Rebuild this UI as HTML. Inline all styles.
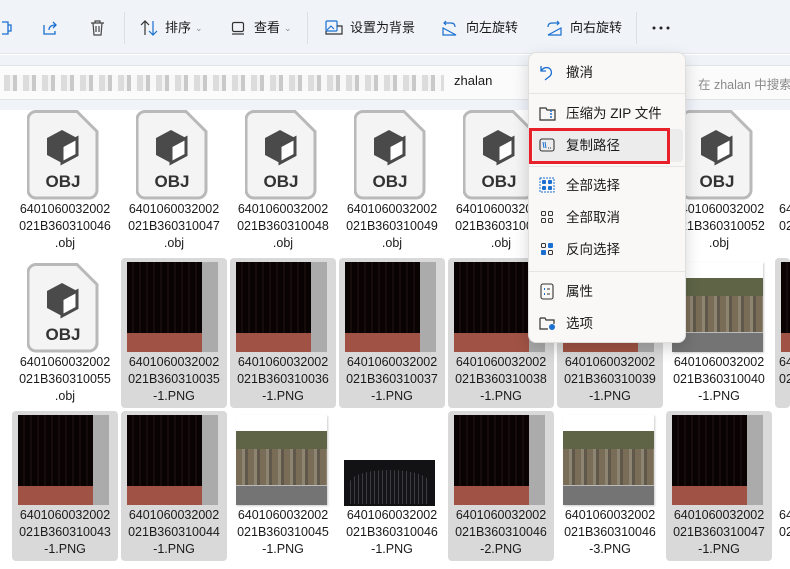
<!DOCTYPE html>
<html style="overflow:hidden"><head><meta charset="utf-8"><style>
*{margin:0;padding:0;box-sizing:border-box}
html,body{width:790px;height:569px;overflow:hidden}
body{background:#fff;font-family:"Liberation Sans","Noto Sans CJK SC",sans-serif;position:relative;color:#1a1a1a}
.tb{position:absolute;left:0;top:0;width:790px;height:54px;background:#f0f4f9;border-bottom:1px solid #e3e6ea}
.ti{position:absolute;top:19px;font-size:13px;line-height:18px;color:#1a1a1a}
.sep{position:absolute;top:12px;width:1px;height:32px;background:#dcdfe3}
.addr{position:absolute;left:0;top:55px;width:790px;height:55px;background:#f0f4f9}
.abox{position:absolute;left:0;top:10px;width:790px;height:35px;background:#fbfbfc;border-top:1px solid #e2e4e8;border-bottom:1px solid #e2e4e8}
.t{position:absolute;width:106px;height:150px;border-radius:4px;overflow:hidden}
.sel{background:#d9d9d9}
.cap{position:absolute;left:0;top:96px;width:106px;text-align:center;font-size:12.5px;line-height:17px;color:#1a1a1a;white-space:nowrap;overflow:hidden}
.obj{position:absolute;left:15px;top:5px}
.dk{position:absolute;left:6px;top:4px;width:91px;height:90px;background:#0a0303;overflow:hidden}
.dk .r{position:absolute;left:0;bottom:0;width:75px;height:19px;background:#a05344}
.dk .g{position:absolute;right:0;top:0;width:16px;height:90px;background:#ababab}
.dk .s{position:absolute;left:0;top:0;width:75px;height:71px;background:repeating-linear-gradient(90deg,#0a0303 0 5px,#160c0c 5px 7px)}
.br{position:absolute;left:6px;top:4px;width:91px;height:90px;background:#fff;overflow:hidden;box-shadow:1px 1px 2px rgba(0,0,0,.2)}
.br .a{position:absolute;left:0;top:16px;width:91px;height:18px;background:#5e6445}
.br .b{position:absolute;left:0;top:34px;width:91px;height:36px;background:repeating-linear-gradient(90deg,#7a6d58 0 6px,#8d8572 6px 9px,#5f584b 9px 12px)}
.br .c{position:absolute;left:0;top:70px;width:91px;height:20px;background:#747474;border-top:1px solid #bbb}
.gate{position:absolute;left:5px;top:49px;width:91px;height:46px;background:#121214}
.gate div{position:absolute;left:6px;top:10px;width:79px;height:34px;background:repeating-linear-gradient(90deg,#3c3c42 0 1px,#141416 1px 4px);border-radius:40px 40px 0 0/12px 12px 0 0}
.menu{position:absolute;left:528px;top:52px;width:158px;height:291px;background:#f9f8f7;border:1px solid #dedede;border-radius:8px;box-shadow:0 6px 16px rgba(0,0,0,.16)}
.mi{position:absolute;left:37px;font-size:13.5px;line-height:18px;color:#1a1a1a}
.mic{position:absolute;left:10px}
.msep{position:absolute;left:0;width:156px;height:1px;background:#e5e5e5}
</style></head><body>
<div class="tb">
  <svg style="position:absolute;left:0;top:19px" width="12" height="18" viewBox="0 0 12 18"><path d="M2 3h6v12H2M8 6h3v6H8" fill="none" stroke="#1a6fd0" stroke-width="1.3"/></svg>
  <svg style="position:absolute;left:41px;top:19px" width="18" height="18" viewBox="0 0 18 18"><path d="M3 6v9h11v-3M8 11c0-4 3-5 7-5M12 3l3 3-3 3" fill="none" stroke="#1a6fd0" stroke-width="1.3"/></svg>
  <svg style="position:absolute;left:89px;top:19px" width="17" height="18" viewBox="0 0 17 18"><path d="M2 4h13M6 4V2h5v2M4 4l1 12h7l1-12M7 7v6M10 7v6" fill="none" stroke="#444" stroke-width="1.2"/></svg>
  <div class="sep" style="left:124px"></div>
  <svg style="position:absolute;left:140px;top:19px" width="18" height="18" viewBox="0 0 18 18"><path d="M5 16V2M1 6l4-4 4 4" fill="none" stroke="#333" stroke-width="1.2"/><path d="M13 2v14M9 12l4 4 4-4" fill="none" stroke="#1a6fd0" stroke-width="1.2"/></svg>
  <div class="ti" style="left:165px">排序</div><div class="ti" style="left:195px;font-size:9px;color:#888">⌄</div>
  <svg style="position:absolute;left:231px;top:21px" width="14" height="14" viewBox="0 0 14 14"><rect x="1.5" y="1.5" width="11" height="9" rx="1.5" fill="none" stroke="#333" stroke-width="1.2"/><path d="M1 13h12" stroke="#333" stroke-width="1.2"/></svg>
  <div class="ti" style="left:254px">查看</div><div class="ti" style="left:284px;font-size:9px;color:#888">⌄</div>
  <div class="sep" style="left:307px"></div>
  <svg style="position:absolute;left:325px;top:19px" width="18" height="17" viewBox="0 0 18 17"><rect x="1" y="2" width="11" height="10" rx="1" fill="none" stroke="#1a6fd0" stroke-width="1.2"/><path d="M12 7h5v8H1v-3" fill="none" stroke="#333" stroke-width="1.2"/><path d="M2 11l4-4 3 3" fill="none" stroke="#1a6fd0" stroke-width="1.1"/></svg>
  <div class="ti" style="left:350px">设置为背景</div>
  <svg style="position:absolute;left:442px;top:19px" width="17" height="18" viewBox="0 0 17 18"><path d="M4 2L2 4l2 2M2 4h7c3 0 4 2 4 4M1 9l13 7H1z" fill="none" stroke="#1a6fd0" stroke-width="1.2"/></svg>
  <div class="ti" style="left:466px">向左旋转</div>
  <svg style="position:absolute;left:545px;top:19px" width="17" height="18" viewBox="0 0 17 18"><path d="M12 2l2 2-2 2M14 4H7C4 4 3 6 3 8M16 9L3 16h13z" fill="none" stroke="#1a6fd0" stroke-width="1.2"/></svg>
  <div class="ti" style="left:570px">向右旋转</div>
  <div class="sep" style="left:636px"></div>
  <svg style="position:absolute;left:652px;top:26px" width="18" height="4" viewBox="0 0 18 4"><circle cx="2" cy="2" r="1.5" fill="#222"/><circle cx="9" cy="2" r="1.5" fill="#222"/><circle cx="16" cy="2" r="1.5" fill="#222"/></svg>
</div>
<div class="addr"><div class="abox">
  <div style="position:absolute;left:4px;top:9px;width:440px;height:16px;background:repeating-linear-gradient(90deg,#c8c8c8 0 6px,#eeeeee 6px 9px,#a8a8a8 9px 13px,#f6f6f6 13px 19px);opacity:.6"></div>
  <div style="position:absolute;left:454px;top:7px;font-size:13px;color:#1a1a1a">zhalan</div>
  <div style="position:absolute;left:698px;top:8px;font-size:12.5px;color:#8a8a8a;white-space:nowrap">在 zhalan 中搜索</div>
</div></div>

<!-- Row 1 -->
<div class="t" style="left:12px;top:105px"><svg class="obj" width="72" height="90" viewBox="0 0 72 90"><path d="M9 1.5h41l20 20V80a8 8 0 0 1-8 8H9a8 8 0 0 1-8-8V9.5a8 8 0 0 1 8-8z" fill="#f4f4f4" stroke="#b9b9b9" stroke-width="3"/><path d="M35 20l15 8v17l-15 8-15-8V28z" fill="#4a4a4a"/><path d="M35 36l15-8v17l-15 8z" fill="#fff" stroke="#4a4a4a" stroke-width="3"/><text x="36" y="77" text-anchor="middle" font-family="Liberation Sans" font-weight="bold" font-size="17" fill="#333">OBJ</text></svg><div class="cap">6401060032002<br>021B360310046<br>.obj</div></div>
<div class="t" style="left:121px;top:105px"><svg class="obj" width="72" height="90" viewBox="0 0 72 90"><path d="M9 1.5h41l20 20V80a8 8 0 0 1-8 8H9a8 8 0 0 1-8-8V9.5a8 8 0 0 1 8-8z" fill="#f4f4f4" stroke="#b9b9b9" stroke-width="3"/><path d="M35 20l15 8v17l-15 8-15-8V28z" fill="#4a4a4a"/><path d="M35 36l15-8v17l-15 8z" fill="#fff" stroke="#4a4a4a" stroke-width="3"/><text x="36" y="77" text-anchor="middle" font-family="Liberation Sans" font-weight="bold" font-size="17" fill="#333">OBJ</text></svg><div class="cap">6401060032002<br>021B360310047<br>.obj</div></div>
<div class="t" style="left:230px;top:105px"><svg class="obj" width="72" height="90" viewBox="0 0 72 90"><path d="M9 1.5h41l20 20V80a8 8 0 0 1-8 8H9a8 8 0 0 1-8-8V9.5a8 8 0 0 1 8-8z" fill="#f4f4f4" stroke="#b9b9b9" stroke-width="3"/><path d="M35 20l15 8v17l-15 8-15-8V28z" fill="#4a4a4a"/><path d="M35 36l15-8v17l-15 8z" fill="#fff" stroke="#4a4a4a" stroke-width="3"/><text x="36" y="77" text-anchor="middle" font-family="Liberation Sans" font-weight="bold" font-size="17" fill="#333">OBJ</text></svg><div class="cap">6401060032002<br>021B360310048<br>.obj</div></div>
<div class="t" style="left:339px;top:105px"><svg class="obj" width="72" height="90" viewBox="0 0 72 90"><path d="M9 1.5h41l20 20V80a8 8 0 0 1-8 8H9a8 8 0 0 1-8-8V9.5a8 8 0 0 1 8-8z" fill="#f4f4f4" stroke="#b9b9b9" stroke-width="3"/><path d="M35 20l15 8v17l-15 8-15-8V28z" fill="#4a4a4a"/><path d="M35 36l15-8v17l-15 8z" fill="#fff" stroke="#4a4a4a" stroke-width="3"/><text x="36" y="77" text-anchor="middle" font-family="Liberation Sans" font-weight="bold" font-size="17" fill="#333">OBJ</text></svg><div class="cap">6401060032002<br>021B360310049<br>.obj</div></div>
<div class="t" style="left:448px;top:105px"><svg class="obj" width="72" height="90" viewBox="0 0 72 90"><path d="M9 1.5h41l20 20V80a8 8 0 0 1-8 8H9a8 8 0 0 1-8-8V9.5a8 8 0 0 1 8-8z" fill="#f4f4f4" stroke="#b9b9b9" stroke-width="3"/><path d="M35 20l15 8v17l-15 8-15-8V28z" fill="#4a4a4a"/><path d="M35 36l15-8v17l-15 8z" fill="#fff" stroke="#4a4a4a" stroke-width="3"/><text x="36" y="77" text-anchor="middle" font-family="Liberation Sans" font-weight="bold" font-size="17" fill="#333">OBJ</text></svg><div class="cap">6401060032002<br>021B360310050<br>.obj</div></div>
<div class="t" style="left:666px;top:105px"><svg class="obj" width="72" height="90" viewBox="0 0 72 90"><path d="M9 1.5h41l20 20V80a8 8 0 0 1-8 8H9a8 8 0 0 1-8-8V9.5a8 8 0 0 1 8-8z" fill="#f4f4f4" stroke="#b9b9b9" stroke-width="3"/><path d="M35 20l15 8v17l-15 8-15-8V28z" fill="#4a4a4a"/><path d="M35 36l15-8v17l-15 8z" fill="#fff" stroke="#4a4a4a" stroke-width="3"/><text x="36" y="77" text-anchor="middle" font-family="Liberation Sans" font-weight="bold" font-size="17" fill="#333">OBJ</text></svg><div class="cap">6401060032002<br>021B360310052<br>.obj</div></div>
<div class="t" style="left:775px;top:105px;width:15px"><div class="cap" style="text-align:left;left:4px">6401060032002<br>021B360310053</div></div>

<!-- Row 2 -->
<div class="t" style="left:12px;top:258px"><svg class="obj" width="72" height="90" viewBox="0 0 72 90"><path d="M9 1.5h41l20 20V80a8 8 0 0 1-8 8H9a8 8 0 0 1-8-8V9.5a8 8 0 0 1 8-8z" fill="#f4f4f4" stroke="#b9b9b9" stroke-width="3"/><path d="M35 20l15 8v17l-15 8-15-8V28z" fill="#4a4a4a"/><path d="M35 36l15-8v17l-15 8z" fill="#fff" stroke="#4a4a4a" stroke-width="3"/><text x="36" y="77" text-anchor="middle" font-family="Liberation Sans" font-weight="bold" font-size="17" fill="#333">OBJ</text></svg><div class="cap">6401060032002<br>021B360310055<br>.obj</div></div>
<div class="t sel" style="left:121px;top:258px"><div class="dk"><div class="s"></div><div class="r"></div><div class="g"></div></div><div class="cap">6401060032002<br>021B360310035<br>-1.PNG</div></div>
<div class="t sel" style="left:230px;top:258px"><div class="dk"><div class="s"></div><div class="r"></div><div class="g"></div></div><div class="cap">6401060032002<br>021B360310036<br>-1.PNG</div></div>
<div class="t sel" style="left:339px;top:258px"><div class="dk"><div class="s"></div><div class="r"></div><div class="g"></div></div><div class="cap">6401060032002<br>021B360310037<br>-1.PNG</div></div>
<div class="t sel" style="left:448px;top:258px"><div class="dk"><div class="s"></div><div class="r"></div><div class="g"></div></div><div class="cap">6401060032002<br>021B360310038<br>-1.PNG</div></div>
<div class="t sel" style="left:557px;top:258px"><div class="dk"><div class="s"></div><div class="r"></div><div class="g"></div></div><div class="cap">6401060032002<br>021B360310039<br>-1.PNG</div></div>
<div class="t" style="left:666px;top:258px"><div class="br"><div class="a"></div><div class="b"></div><div class="c"></div></div><div class="cap">6401060032002<br>021B360310040<br>-1.PNG</div></div>
<div class="t sel" style="left:775px;top:258px;width:15px"><div class="dk"><div class="s"></div><div class="r"></div><div class="g"></div></div><div class="cap" style="text-align:left;left:4px">6401060032002<br>021B360310041</div></div>

<!-- Row 3 -->
<div class="t sel" style="left:12px;top:411px"><div class="dk"><div class="s"></div><div class="r"></div><div class="g"></div></div><div class="cap">6401060032002<br>021B360310043<br>-1.PNG</div></div>
<div class="t sel" style="left:121px;top:411px"><div class="dk"><div class="s"></div><div class="r"></div><div class="g"></div></div><div class="cap">6401060032002<br>021B360310044<br>-1.PNG</div></div>
<div class="t" style="left:230px;top:411px"><div class="br"><div class="a"></div><div class="b"></div><div class="c"></div></div><div class="cap">6401060032002<br>021B360310045<br>-1.PNG</div></div>
<div class="t" style="left:339px;top:411px"><div class="gate"><div></div></div><div class="cap">6401060032002<br>021B360310046<br>-1.PNG</div></div>
<div class="t sel" style="left:448px;top:411px"><div class="dk"><div class="s"></div><div class="r"></div><div class="g"></div></div><div class="cap">6401060032002<br>021B360310046<br>-2.PNG</div></div>
<div class="t" style="left:557px;top:411px"><div class="br"><div class="a"></div><div class="b"></div><div class="c"></div></div><div class="cap">6401060032002<br>021B360310046<br>-3.PNG</div></div>
<div class="t sel" style="left:666px;top:411px"><div class="dk"><div class="s"></div><div class="r"></div><div class="g"></div></div><div class="cap">6401060032002<br>021B360310047<br>-1.PNG</div></div>
<div class="t" style="left:775px;top:411px;width:15px"><div class="cap" style="text-align:left;left:4px">6401060032002<br>021B360310048</div></div>

<!-- Menu -->
<div class="menu">
  <svg class="mic" style="top:11px" width="16" height="17" viewBox="0 0 16 17"><path d="M2 2v5h5M2 7c2-3 5-4 8-3 3 2 3 6 1 8l-5 4" fill="none" stroke="#1a6fd0" stroke-width="1.3"/></svg>
  <div class="mi" style="top:11px">撤消</div>
  <div class="msep" style="top:40px"></div>
  <svg class="mic" style="top:52px" width="17" height="16" viewBox="0 0 17 16"><path d="M1 3h6l1 2h8v10H1z" fill="none" stroke="#333" stroke-width="1.2"/><path d="M12 5v9" stroke="#1a6fd0" stroke-width="1.5" stroke-dasharray="2 1"/></svg>
  <div class="mi" style="top:52px">压缩为 ZIP 文件</div>
  <div style="position:absolute;left:4px;top:76px;width:150px;height:33px;background:#ececec;border-radius:4px"></div>
  <div style="position:absolute;left:0;top:75px;width:141px;height:36px;border:3px solid #e8202a"></div>
  <svg class="mic" style="top:85px" width="16" height="14" viewBox="0 0 16 14"><rect x="1" y="1" width="14" height="12" rx="2" fill="none" stroke="#333" stroke-width="1.1"/><path d="M4 4l1 6M6 4l1 6" stroke="#1a6fd0" stroke-width="1"/><path d="M9 10h1M11 10h1" stroke="#333"/></svg>
  <div class="mi" style="top:84px">复制路径</div>
  <div class="msep" style="top:113px"></div>
  <svg class="mic" style="top:124px" width="16" height="16" viewBox="0 0 16 16"><rect x="1" y="1" width="14" height="14" fill="none" stroke="#1a6fd0" stroke-dasharray="2 1"/><rect x="3" y="3" width="4" height="4" rx="1" fill="#1a6fd0"/><rect x="9" y="3" width="4" height="4" rx="1" fill="#1a6fd0"/><rect x="3" y="9" width="4" height="4" rx="1" fill="#1a6fd0"/><rect x="9" y="9" width="4" height="4" rx="1" fill="#1a6fd0"/></svg>
  <div class="mi" style="top:124px">全部选择</div>
  <svg class="mic" style="top:156px" width="16" height="16" viewBox="0 0 16 16"><rect x="2.5" y="2.5" width="4" height="4" rx="1" fill="none" stroke="#333"/><rect x="9.5" y="2.5" width="4" height="4" rx="1" fill="none" stroke="#333"/><rect x="2.5" y="9.5" width="4" height="4" rx="1" fill="none" stroke="#333"/><rect x="9.5" y="9.5" width="4" height="4" rx="1" fill="none" stroke="#333"/></svg>
  <div class="mi" style="top:156px">全部取消</div>
  <svg class="mic" style="top:188px" width="16" height="16" viewBox="0 0 16 16"><rect x="2.5" y="2.5" width="4" height="4" rx="1" fill="none" stroke="#333"/><rect x="9" y="2" width="5" height="5" rx="1" fill="#1a6fd0"/><rect x="2" y="9" width="5" height="5" rx="1" fill="#1a6fd0"/><rect x="9.5" y="9.5" width="4" height="4" rx="1" fill="none" stroke="#333"/></svg>
  <div class="mi" style="top:188px">反向选择</div>
  <div class="msep" style="top:218px"></div>
  <svg class="mic" style="top:230px" width="16" height="17" viewBox="0 0 16 17"><rect x="2" y="1" width="12" height="15" rx="2" fill="none" stroke="#333" stroke-width="1.1"/><path d="M5 6h1M5 11h1" stroke="#1a6fd0" stroke-width="2"/><path d="M8 6h3M8 11h3" stroke="#333"/></svg>
  <div class="mi" style="top:230px">属性</div>
  <svg class="mic" style="top:262px" width="17" height="16" viewBox="0 0 17 16"><path d="M1 3h5l1 2h8v4M9 14H1V3" fill="none" stroke="#333" stroke-width="1.2"/><circle cx="13" cy="12" r="3" fill="#1a6fd0"/></svg>
  <div class="mi" style="top:262px">选项</div>
</div>
</body></html>
